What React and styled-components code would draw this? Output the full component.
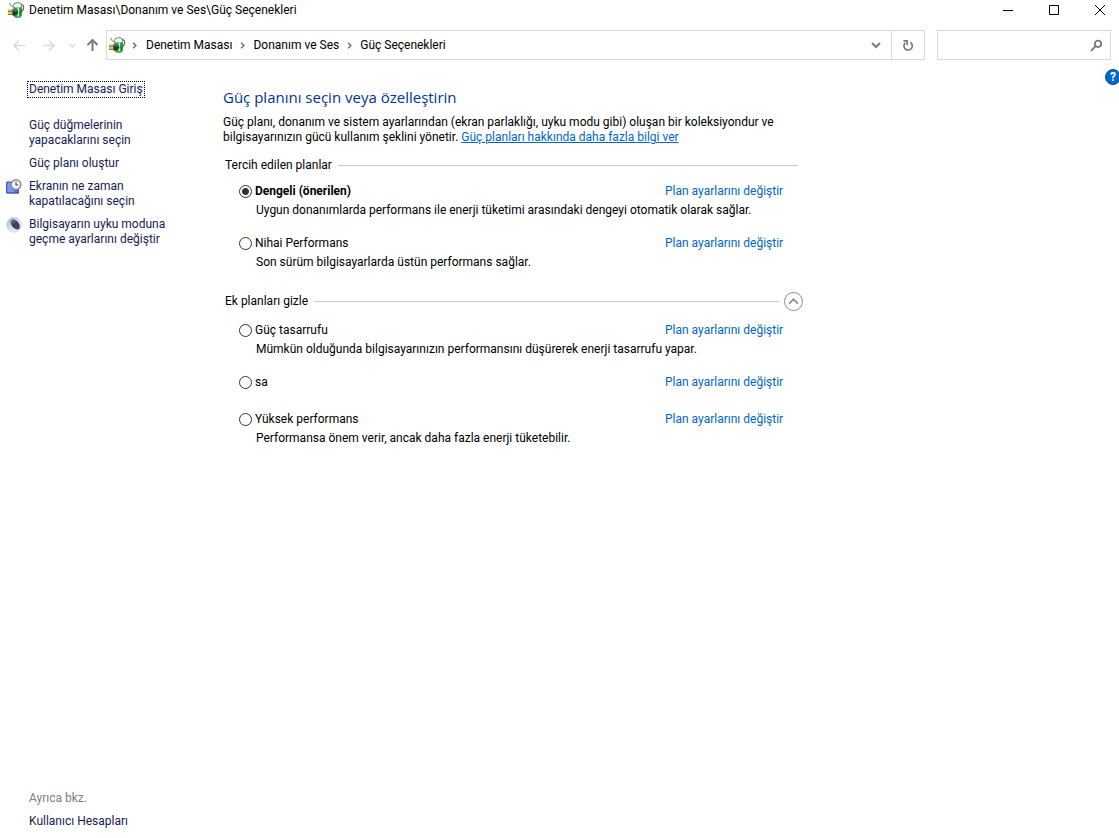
import React, { useState } from 'react';
import styled, { createGlobalStyle } from 'styled-components';

const GlobalStyle = createGlobalStyle`
  * {
    box-sizing: border-box;
  }
  body {
    margin: 0;
    background: #ffffff;
    color: #000000;
    font-family: Roboto, 'Open Sans', sans-serif;
    font-size: 12px;
    line-height: 15px;
  }
  button, input {
    font: inherit;
  }
`;

const Window = styled.div`
  display: flex;
  flex-direction: column;
  min-height: 100vh;
  overflow: hidden;
`;

const TitleBar = styled.header`
  display: flex;
  align-items: center;
  height: 20px;
  margin-right: -4px;
  padding-left: 8px;
`;

const Title = styled.h1`
  flex: 1;
  margin: 0 0 0 4px;
  font-size: 12px;
  font-weight: normal;
`;

const PlainButton = styled.button`
  display: flex;
  align-items: center;
  justify-content: center;
  padding: 0;
  border: 0;
  background: none;
  color: inherit;
`;

const CaptionButton = styled(PlainButton)`
  width: 46px;
  height: 18px;
`;

const NavBar = styled.nav`
  display: flex;
  align-items: center;
  padding: 10px 8px 0 9px;
`;

const NavButton = styled(PlainButton)`
  width: ${(props) => props.$width}px;
  height: 30px;
  color: ${(props) => (props.disabled ? '#dcdcdc' : '#7b7b7b')};
`;

const AddressBar = styled.div`
  display: flex;
  flex: 1;
  align-items: center;
  height: 30px;
  margin-right: 12px;
  padding-left: 2px;
  border: 1px solid #d9d9d9;
`;

const Crumbs = styled.ol`
  display: flex;
  flex: 1;
  margin: 0;
  padding: 0;
  list-style: none;
`;

const Crumb = styled.li`
  display: flex;
  align-items: center;
  color: #6e6e6e;

  svg {
    margin: 0 7px;
  }
  &:first-child svg {
    margin: 0 8px 0 5px;
  }
`;

const CrumbLink = styled.a`
  color: #000000;
  text-decoration: none;
`;

const RefreshButton = styled(NavButton)`
  height: 28px;
  border-left: 1px solid #d9d9d9;
`;

const SearchBox = styled.label`
  display: flex;
  align-items: center;
  width: 174px;
  height: 30px;
  padding-right: 7px;
  border: 1px solid #d9d9d9;
  color: #7b7b7b;
`;

const SearchInput = styled.input`
  flex: 1;
  min-width: 0;
  height: 28px;
  border: 0;
  outline: 0;
  background: none;
`;

const Body = styled.div`
  display: flex;
  flex: 1;
`;

const Sidebar = styled.aside`
  display: flex;
  flex-direction: column;
  width: 200px;
  padding: 21px 10px 9px 6px;
`;

const HomeLink = styled.a`
  align-self: flex-start;
  margin: 0 0 20px 21px;
  padding: 0 1px;
  border: 1px dotted #000000;
  color: #151c55;
  text-decoration: none;
`;

const TaskList = styled.ul`
  display: flex;
  flex-direction: column;
  gap: 8px;
  margin: 0;
  padding: 0;
  list-style: none;
`;

const Task = styled.li`
  display: grid;
  grid-template-columns: 16px 144px;
  column-gap: 7px;
`;

const TaskLink = styled.a`
  grid-column: 2;
  color: #151c55;
  text-decoration: none;
`;

const SeeAlso = styled.div`
  display: flex;
  flex-direction: column;
  gap: 8px;
  margin-top: auto;
  padding-left: 23px;
`;

const SeeAlsoTitle = styled.span`
  color: #808080;
`;

const Main = styled.main`
  flex: 1;
  max-width: 603px;
  padding: 27px 0 0 23px;
`;

const Heading = styled.h2`
  margin: 0 0 8px;
  color: #003399;
  font-family: 'Open Sans', 'Noto Sans', sans-serif;
  font-size: 15px;
  font-weight: normal;
  line-height: 20px;
`;

const Intro = styled.p`
  margin: 0 0 13px;
  padding-right: 22px;
`;

const HelpLink = styled.a`
  color: #0066cc;
`;

const Group = styled.section`
  padding-bottom: 6px;
`;

const GroupHeader = styled.div`
  display: flex;
  align-items: center;
  height: 15px;
  margin: 0 0 ${(props) => props.$gap}px 2px;
`;

const GroupTitle = styled.h3`
  margin: 0 6px 0 0;
  font-size: 12px;
  font-weight: normal;
`;

const Rule = styled.hr`
  flex: 1;
  height: 1px;
  margin: 0 5px 0 0;
  border: 0;
  background: #c8c8c8;
`;

const CollapseButton = styled(PlainButton)`
  width: 19px;
  height: 19px;
  border: 1px solid #8e8e8e;
  border-radius: 50%;
  color: #8e8e8e;
`;

const Plan = styled.div`
  padding: 0 22px 18px 16px;
`;

const PlanRow = styled.div`
  display: grid;
  grid-template-columns: 1fr 116px;
  height: 19px;
`;

const PlanLabel = styled.label`
  display: flex;
  align-items: flex-start;
  font-weight: ${(props) => (props.$recommended ? 'bold' : 'normal')};
`;

const Radio = styled.input`
  appearance: none;
  width: 13px;
  height: 13px;
  margin: 1px 3px 0 0;
  border: 1px solid #333333;
  border-radius: 50%;

  &:checked {
    background: radial-gradient(circle, #333333 3px, #ffffff 4px);
  }
`;

const PlanLink = styled.a`
  color: #0066cc;
  text-decoration: none;
  white-space: nowrap;
`;

const PlanDescription = styled.p`
  margin: 0 0 0 17px;
  white-space: nowrap;
`;

const HelpButton = styled(PlainButton)`
  flex: none;
  width: 16px;
  height: 16px;
  margin: 9px -2px 0 auto;
  border: 1px solid #00539c;
  border-radius: 50%;
  background: #0067c8;
  color: #ffffff;
  font-weight: bold;
`;

const PowerIcon = () => (
  <svg width="17" height="17" viewBox="0 0 17 17">
    <path d="M5.6 3 Q6 .6 9.6 .6 Q13.4 .6 13.6 3 V13.2 Q13.4 15.6 9.8 15.6 Q6 15.6 5.6 13.2Z" fill="#1fb83a" stroke="#6b786f" strokeWidth=".7" />
    <path d="M6 3 Q6.6 1 9.6 1 Q12.6 1 13.2 3 V5 Q9.8 6.2 6 5Z" fill="#f1f4f5" />
    <path d="M10.3 6 V14.4" stroke="#a9f7ab" strokeWidth="1.5" />
    <path d="M12.8 5.6 V13.6" stroke="#12862c" strokeWidth="1" />
    <path d="M1.4 .8 L3.4 3.8 L5.6 5.2" fill="none" stroke="#9a9fa4" strokeWidth="1.2" />
    <path d="M13.2 2.6 Q16.2 3 15.6 6.4 Q14.8 9.8 11.2 11" fill="none" stroke="#55595d" strokeWidth="1.1" />
    <path d="M0 8.8 H4.6 M0 11.8 H4.6" stroke="#5e4a17" strokeWidth="1.9" />
    <path d="M0 8.4 H4.4 M0 11.4 H4.4" stroke="#ecc23f" strokeWidth="1.1" />
    <path d="M4.4 7.4 H7 Q10 8 10.4 10.3 Q10 12.6 7 13.4 H4.4Z" fill="#2f3235" />
    <path d="M5.2 8.6 H7 L8.6 9.6" fill="none" stroke="#8d9195" strokeWidth=".9" />
  </svg>
);

const DisplayIcon = () => (
  <svg width="16" height="16" viewBox="0 0 16 16">
    <path d="M.7 3.1 H12.3 V13.9 H.7Z" fill="#5672e6" stroke="#2f3fae" />
    <path d="M1.4 3.8 H6 L8 13.2 H1.4Z" fill="#7d98f2" />
    <path d="M1 14.4 H13" stroke="#6c7ed8" />
    <circle cx="10" cy="5.6" r="4.9" fill="#f4f5f6" stroke="#858a90" strokeWidth="1.4" />
    <path d="M10 2.6 V6 H12.4" fill="none" stroke="#4a5058" strokeWidth="1.1" />
  </svg>
);

const SleepIcon = () => (
  <svg width="16" height="16" viewBox="0 0 16 16">
    <defs>
      <linearGradient id="moon" x1="0" y1="0" x2="1" y2="1">
        <stop offset="0" stopColor="#a3b1bf" />
        <stop offset=".5" stopColor="#d8e1ea" />
        <stop offset="1" stopColor="#eef2f6" />
      </linearGradient>
      <linearGradient id="shade" x1="0" y1="0" x2="1" y2="0">
        <stop offset="0" stopColor="#6d7c96" />
        <stop offset=".5" stopColor="#33415f" />
        <stop offset="1" stopColor="#3c4d74" />
      </linearGradient>
    </defs>
    <circle cx="8" cy="7.8" r="7.5" fill="url(#moon)" stroke="#ccd5de" strokeWidth=".6" />
    <ellipse cx="9.2" cy="7.4" rx="6" ry="3.6" transform="rotate(50 9.2 7.4)" fill="url(#shade)" />
  </svg>
);

const ArrowIcon = ({ turn = 0 }) => (
  <svg width="13" height="13" viewBox="0 0 13 13" fill="none" stroke="currentColor" strokeWidth={turn === 90 ? 2 : 1.6}>
    <path d="M1 6.5 H12 M6 1.5 L1 6.5 L6 11.5" transform={`rotate(${turn} 6.5 6.5)`} />
  </svg>
);

const Chevron = ({ size, turn = 0, weight = 2 }) => (
  <svg width={size} height={size} viewBox="0 0 10 10" fill="none" stroke="currentColor" strokeWidth={weight}>
    <path d="M1 3 L5 7 L9 3" transform={`rotate(${turn} 5 5)`} />
  </svg>
);

const RefreshIcon = () => (
  <svg width="12" height="13" viewBox="0 0 12 13" fill="none" stroke="currentColor" strokeWidth="1.7">
    <path d="M8.3 3.2 A4.2 4.2 0 1 1 3.2 3.8" />
    <path d="M1.4 1.8 H5.2 V6" />
  </svg>
);

const SearchIcon = () => (
  <svg width="13" height="13" viewBox="0 0 13 13" fill="none" stroke="currentColor">
    <circle cx="8" cy="4.8" r="3.2" strokeWidth="1.8" />
    <path d="M5.6 7.2 L1 11.8" strokeWidth="1.9" />
  </svg>
);

const crumbs = ['Denetim Masası', 'Donanım ve Ses', 'Güç Seçenekleri'];

const tasks = [
  { text: 'Güç düğmelerinin yapacaklarını seçin' },
  { text: 'Güç planı oluştur' },
  { text: 'Ekranın ne zaman kapatılacağını seçin', icon: <DisplayIcon /> },
  { text: 'Bilgisayarın uyku moduna geçme ayarlarını değiştir', icon: <SleepIcon /> },
];

const preferredPlans = [
  {
    name: 'Dengeli (önerilen)',
    recommended: true,
    description: 'Uygun donanımlarda performans ile enerji tüketimi arasındaki dengeyi otomatik olarak sağlar.',
  },
  {
    name: 'Nihai Performans',
    description: 'Son sürüm bilgisayarlarda üstün performans sağlar.',
  },
];

const extraPlans = [
  {
    name: 'Güç tasarrufu',
    description: 'Mümkün olduğunda bilgisayarınızın performansını düşürerek enerji tasarrufu yapar.',
  },
  { name: 'sa' },
  {
    name: 'Yüksek performans',
    description: 'Performansa önem verir, ancak daha fazla enerji tüketebilir.',
  },
];

const PlanList = ({ plans, selected, onSelect }) =>
  plans.map((plan) => (
    <Plan key={plan.name}>
      <PlanRow>
        <PlanLabel $recommended={plan.recommended}>
          <Radio
            type="radio"
            name="plan"
            checked={selected === plan.name}
            onChange={() => onSelect(plan.name)}
          />
          {plan.name}
        </PlanLabel>
        <PlanLink href="#">Plan ayarlarını değiştir</PlanLink>
      </PlanRow>
      {plan.description && <PlanDescription>{plan.description}</PlanDescription>}
    </Plan>
  ));

const App = () => {
  const [selected, setSelected] = useState('Dengeli (önerilen)');
  const [open, setOpen] = useState(true);

  return (
    <Window>
      <GlobalStyle />
      <TitleBar>
        <PowerIcon />
        <Title>Denetim Masası\Donanım ve Ses\Güç Seçenekleri</Title>
        <CaptionButton aria-label="Simge durumuna küçült">
          <svg width="10" height="10"><path d="M0 5.5 H10" stroke="#000" /></svg>
        </CaptionButton>
        <CaptionButton aria-label="Ekranı kapla">
          <svg width="10" height="10"><path d="M.5 .5 H9.5 V9.5 H.5Z" fill="none" stroke="#000" /></svg>
        </CaptionButton>
        <CaptionButton aria-label="Kapat">
          <svg width="10" height="10"><path d="M0 0 L10 10 M10 0 L0 10" stroke="#000" /></svg>
        </CaptionButton>
      </TitleBar>
      <NavBar>
        <NavButton $width={20} disabled aria-label="Geri"><ArrowIcon /></NavButton>
        <NavButton $width={38} disabled aria-label="İleri"><ArrowIcon turn={180} /></NavButton>
        <NavButton $width={11} disabled aria-label="Son konumlar"><Chevron size={7} /></NavButton>
        <NavButton $width={28} aria-label="Yukarı"><ArrowIcon turn={90} /></NavButton>
        <AddressBar>
          <PowerIcon />
          <Crumbs>
            {crumbs.map((crumb) => (
              <Crumb key={crumb}>
                <Chevron size={7} turn={-90} />
                <CrumbLink href="#">{crumb}</CrumbLink>
              </Crumb>
            ))}
          </Crumbs>
          <NavButton $width={30} aria-label="Önceki konumlar"><Chevron size={10} weight={2} /></NavButton>
          <RefreshButton $width={33} aria-label="Yenile"><RefreshIcon /></RefreshButton>
        </AddressBar>
        <SearchBox>
          <SearchInput type="search" aria-label="Ara" />
          <SearchIcon />
        </SearchBox>
      </NavBar>
      <Body>
        <Sidebar>
          <HomeLink href="#">Denetim Masası Giriş</HomeLink>
          <TaskList>
            {tasks.map((task) => (
              <Task key={task.text}>
                {task.icon}
                <TaskLink href="#">{task.text}</TaskLink>
              </Task>
            ))}
          </TaskList>
          <SeeAlso>
            <SeeAlsoTitle>Ayrıca bkz.</SeeAlsoTitle>
            <TaskLink href="#">Kullanıcı Hesapları</TaskLink>
          </SeeAlso>
        </Sidebar>
        <Main>
          <Heading>Güç planını seçin veya özelleştirin</Heading>
          <Intro>
            Güç planı, donanım ve sistem ayarlarından (ekran parlaklığı, uyku modu gibi) oluşan bir koleksiyondur ve
            bilgisayarınızın gücü kullanım şeklini yönetir.{' '}
            <HelpLink href="#">Güç planları hakkında daha fazla bilgi ver</HelpLink>
          </Intro>
          <Group>
            <GroupHeader $gap={11}>
              <GroupTitle>Tercih edilen planlar</GroupTitle>
              <Rule />
            </GroupHeader>
            <PlanList plans={preferredPlans} selected={selected} onSelect={setSelected} />
          </Group>
          <Group>
            <GroupHeader $gap={14}>
              <GroupTitle>Ek planları gizle</GroupTitle>
              <Rule />
              <CollapseButton aria-label="Ek planları gizle" onClick={() => setOpen(!open)}>
                <Chevron size={11} turn={open ? 180 : 0} weight={1.6} />
              </CollapseButton>
            </GroupHeader>
            {open && <PlanList plans={extraPlans} selected={selected} onSelect={setSelected} />}
          </Group>
        </Main>
        <HelpButton aria-label="Yardım">?</HelpButton>
      </Body>
    </Window>
  );
};

export default App;
